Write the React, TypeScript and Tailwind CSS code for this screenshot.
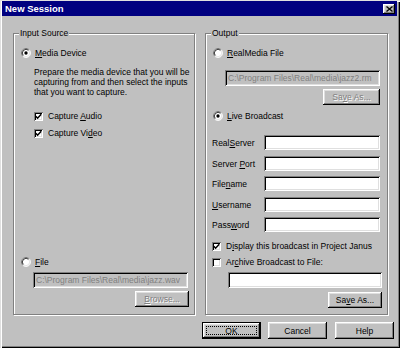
import React from "react";

function Acc({ t, u }: { t: string; u: number }) {
  if (u < 0) return <>{t}</>;
  return (
    <>
      {t.slice(0, u)}
      <span className="underline decoration-1 underline-offset-[1px]">{t[u]}</span>
      {t.slice(u + 1)}
    </>
  );
}

function Radio({ checked }: { checked?: boolean }) {
  return (
    <svg width="10" height="10" viewBox="0 0 12 12" className="shrink-0">
      <circle cx="6" cy="6" r="5" fill="#fff" />
      <path d="M2.11 9.89 A5.5 5.5 0 0 1 9.89 2.11" stroke="#808080" fill="none" strokeWidth="1" />
      <path d="M9.89 2.11 A5.5 5.5 0 0 1 2.11 9.89" stroke="#fff" fill="none" strokeWidth="1" />
      <path d="M2.82 9.18 A4.5 4.5 0 0 1 9.18 2.82" stroke="#000" fill="none" strokeWidth="1" />
      <path d="M9.18 2.82 A4.5 4.5 0 0 1 2.82 9.18" stroke="#dfdfdf" fill="none" strokeWidth="1" />
      {checked && <circle cx="6" cy="6" r="2" fill="#000" />}
    </svg>
  );
}

function Check({ checked }: { checked?: boolean }) {
  return (
    <div className="w-[9px] h-[9px] shrink-0 bg-white shadow-[inset_1px_1px_0_#808080,inset_-1px_-1px_0_#fff,inset_2px_2px_0_#000,inset_-2px_-2px_0_#dfdfdf] flex items-center justify-center">
      {checked && (
        <svg width="7" height="7" viewBox="0 0 7 7">
          <path d="M0.8 3.2 L2.6 5.2 L6.2 1.2" stroke="#000" strokeWidth="1.5" fill="none" />
        </svg>
      )}
    </div>
  );
}

const raised =
  "bg-[#c0c0c0] shadow-[inset_-1px_-1px_0_#000,inset_1px_1px_0_#fff,inset_-2px_-2px_0_#808080,inset_2px_2px_0_#dfdfdf]";
const sunken =
  "shadow-[inset_1px_1px_0_#808080,inset_-1px_-1px_0_#fff,inset_2px_2px_0_#000,inset_-2px_-2px_0_#dfdfdf]";
const disabledText = "text-[#808080] [text-shadow:1px_1px_0_#fff]";

function Group({ label, children, w }: { label: string; children: React.ReactNode; w: string }) {
  return (
    <div
      className={`relative ${w} h-[282px] border border-[#808080] shadow-[inset_1px_1px_0_#fff,1px_1px_0_#fff] flex flex-col`}
    >
      <span className="absolute -top-[6px] left-[5px] px-[1px] bg-[#c0c0c0] leading-[10px]">{label}</span>
      {children}
    </div>
  );
}

export default function App() {
  return (
    <div className="relative w-[400px] h-[348px] bg-[#c0c0c0] overflow-hidden font-['Liberation_Sans',Arial,sans-serif] text-[8.5px] leading-[10px] text-black shadow-[inset_1px_1px_0_#dfdfdf,inset_2px_2px_0_#fff,inset_-1px_-1px_0_#000,inset_-2px_-2px_0_#808080]">
      {/* Title bar */}
      <div className="mt-[1px] ml-[2px] w-[395px] h-[15px] bg-[#000080] flex items-center justify-between pl-[3px] pr-[2px]">
        <span className="text-white font-bold text-[9.5px] leading-[11px]">New Session</span>
        <div className={`w-[12px] h-[10px] ${raised} flex items-center justify-center`}>
          <svg width="7" height="6" viewBox="0 0 7 6">
            <path d="M0.5 0.5 L6.5 5.5 M6.5 0.5 L0.5 5.5" stroke="#000" strokeWidth="1.3" />
          </svg>
        </div>
      </div>

      {/* Groups */}
      <div className="flex gap-[10px] pl-[13px] mt-[17px]">
        <Group label="Input Source" w="w-[182px]">
          <div className="mt-[13px] pl-[7px] h-[12px] flex items-center gap-[4px]">
            <Radio checked />
            <span><Acc t="Media Device" u={0} /></span>
          </div>
          <div className="mt-[8px] pl-[20px] whitespace-nowrap">
            Prepare the media device that you will be
            <br />
            capturing from and then select the inputs
            <br />
            that you want to capture.
          </div>
          <div className="mt-[13px] pl-[20px] h-[12px] flex items-center gap-[5px]">
            <Check checked />
            <span><Acc t="Capture Audio" u={8} /></span>
          </div>
          <div className="mt-[5px] pl-[20px] h-[12px] flex items-center gap-[5px]">
            <Check checked />
            <span><Acc t="Capture Video" u={10} /></span>
          </div>
          <div className="mt-auto pl-[7px] h-[12px] flex items-center gap-[4px]">
            <Radio />
            <span><Acc t="File" u={0} /></span>
          </div>
          <div className={`mt-[4px] ml-[19px] w-[155px] h-[16px] ${sunken} flex items-center pl-[3px] whitespace-nowrap overflow-hidden`}>
            <span className="text-[#808080]">C:\Program Files\Real\media\jazz.wav</span>
          </div>
          <div className={`mt-[3px] mb-[7px] ml-[121px] w-[54px] h-[16px] ${raised} flex items-center justify-center`}>
            <span className={disabledText}><Acc t="Browse..." u={0} /></span>
          </div>
        </Group>

        <Group label="Output" w="w-[183px]">
          <div className="mt-[13px] pl-[7px] h-[12px] flex items-center gap-[4px]">
            <Radio />
            <span><Acc t="RealMedia File" u={0} /></span>
          </div>
          <div className={`mt-[11px] ml-[19px] w-[155px] h-[16px] ${sunken} flex items-center pl-[3px] whitespace-nowrap overflow-hidden`}>
            <span className="text-[#808080]">C:\Program Files\Real\media\jazz2.rm</span>
          </div>
          <div className={`mt-[3px] ml-[117px] w-[57px] h-[16px] ${raised} flex items-center justify-center`}>
            <span className={disabledText}><Acc t="Save As..." u={2} /></span>
          </div>
          <div className="mt-[5px] pl-[7px] h-[12px] flex items-center gap-[4px]">
            <Radio checked />
            <span><Acc t="Live Broadcast" u={0} /></span>
          </div>
          {[
            { t: "RealServer", u: 4, mt: "mt-[13px]" },
            { t: "Server Port", u: 7, mt: "mt-[6px]" },
            { t: "Filename", u: 4, mt: "mt-[5px]" },
            { t: "Username", u: 0, mt: "mt-[6px]" },
            { t: "Password", u: 4, mt: "mt-[5px]" },
          ].map((r) => (
            <div key={r.t} className={`${r.mt} flex items-center h-[15px]`}>
              <span className="pl-[6px] w-[58px]"><Acc t={r.t} u={r.u} /></span>
              <div className={`w-[116px] h-[15px] bg-white ${sunken}`} />
            </div>
          ))}
          <div className="mt-[8px] pl-[6px] h-[12px] flex items-center gap-[5px]">
            <Check checked />
            <span><Acc t="Display this broadcast in Project Janus" u={1} /></span>
          </div>
          <div className="mt-[4px] pl-[6px] h-[12px] flex items-center gap-[5px]">
            <Check />
            <span><Acc t="Archive Broadcast to File:" u={2} /></span>
          </div>
          <div className={`mt-[4px] ml-[22px] w-[154px] h-[16px] bg-white ${sunken}`} />
          <div className={`mt-[4px] mb-[6px] ml-[122px] w-[54px] h-[16px] ${raised} flex items-center justify-center`}>
            <span><Acc t="Save As..." u={2} /></span>
          </div>
        </Group>
      </div>

      {/* Buttons */}
      <div className="flex pl-[202px] mt-[7px]">
        <div className="w-[59px] h-[17px] border border-black">
          <div className={`w-full h-full ${raised} p-[3px]`}>
            <div className="w-full h-full border border-dotted border-black flex items-center justify-center">OK</div>
          </div>
        </div>
        <div className={`ml-[7px] w-[59px] h-[17px] ${raised} flex items-center justify-center`}>Cancel</div>
        <div className={`ml-[8px] w-[59px] h-[17px] ${raised} flex items-center justify-center`}>Help</div>
      </div>
    </div>
  );
}
